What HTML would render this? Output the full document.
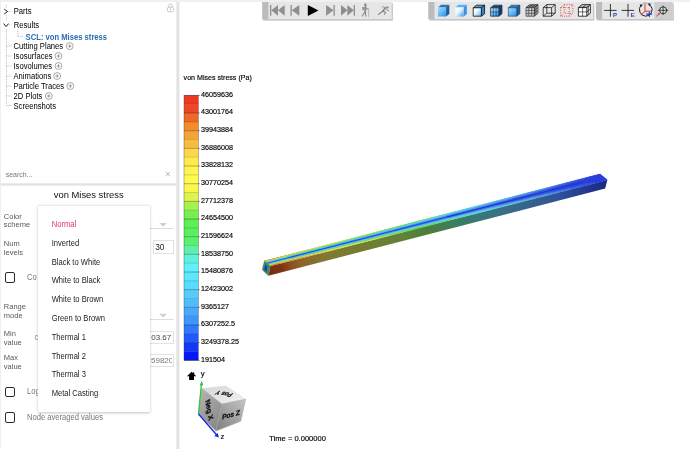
<!DOCTYPE html>
<html>
<head>
<meta charset="utf-8">
<style>
html,body{margin:0;padding:0;}
body{width:690px;height:449px;overflow:hidden;background:#eff0f1;font-family:"Liberation Sans",sans-serif;position:relative;color:#222;}
.abs{position:absolute;}
#tree{left:1.2px;top:1.7px;width:175.3px;height:181.3px;background:#fff;}
#props{left:1.2px;top:186px;width:175.3px;height:263px;background:#fff;}
#view{left:180.3px;top:1.7px;width:510px;height:447.3px;background:#fff;}
#gut{left:176.4px;top:1.7px;width:3.9px;height:447.3px;background:linear-gradient(to right,#f4f4f4,#dfdfdf 40%,#e4e4e4 65%,#fbfbfb);}
#hdiv{left:1.2px;top:183px;width:175.3px;height:3px;background:linear-gradient(to bottom,#f0f0f0,#e2e2e2 45%,#e6e6e6 70%,#f6f6f6);}
.t{position:absolute;font-size:7.65px;line-height:10px;white-space:nowrap;color:#000;transform:scaleY(1.1);transform-origin:0 76%;}
.lbl{position:absolute;left:3.8px;font-size:7.5px;line-height:10px;white-space:nowrap;color:#585858;transform:scaleY(1.07);transform-origin:0 76%;}
.mi{position:absolute;left:51.7px;font-size:7.6px;line-height:10px;color:#1c1c1c;white-space:nowrap;transform:scaleY(1.07);transform-origin:0 76%;}
.cb{position:absolute;left:5px;width:8.4px;height:8.4px;border:1.35px solid #2a2a2a;border-radius:2px;background:#fff;}
.inp{position:absolute;border:0.8px solid #e2e2e2;background:#fff;box-sizing:border-box;}
.tick{position:absolute;font-size:7.2px;line-height:10px;color:#000;left:201.1px;white-space:nowrap;-webkit-text-stroke:0.15px #000;transform:scaleY(1.12);transform-origin:0 50%;}
.plus{position:absolute;width:6.5px;height:6.5px;border:0.55px solid #858585;border-radius:50%;}
.plus:before{content:"";position:absolute;left:1.5px;top:2.95px;width:3.5px;height:0.6px;background:#858585;}
.plus:after{content:"";position:absolute;top:1.5px;left:2.95px;height:3.5px;width:0.6px;background:#858585;}
svg{position:absolute;left:0;top:0;}
</style>
</head>
<body>
<div id="root" style="position:absolute;left:0;top:0;width:690px;height:449px;will-change:transform;">
<div id="tree" class="abs"></div>
<div id="props" class="abs"></div>
<div id="view" class="abs"></div>
<div id="gut" class="abs"></div>
<div id="hdiv" class="abs"></div>

<!-- tree lines + chevrons + lock + close -->
<svg width="180" height="190" viewBox="0 0 180 190">
  <g stroke="#b0b0b0" stroke-width="0.7" fill="none" stroke-dasharray="1.2 0.8">
    <line x1="6.4" y1="4.5" x2="6.4" y2="8"/>
    <line x1="6.4" y1="15" x2="6.4" y2="21"/>
    <line x1="6.4" y1="29" x2="6.4" y2="105.5"/>
    <line x1="8.5" y1="11.5" x2="11.5" y2="11.5"/>
    <line x1="9" y1="25" x2="11.5" y2="25"/>
    <line x1="6.4" y1="46" x2="11.5" y2="46"/>
    <line x1="6.4" y1="56" x2="11.5" y2="56"/>
    <line x1="6.4" y1="66" x2="11.5" y2="66"/>
    <line x1="6.4" y1="76" x2="11.5" y2="76"/>
    <line x1="6.4" y1="86" x2="11.5" y2="86"/>
    <line x1="6.4" y1="96" x2="11.5" y2="96"/>
    <line x1="6.4" y1="105.5" x2="11.5" y2="105.5"/>
    <line x1="17.8" y1="29" x2="17.8" y2="36.5"/>
    <line x1="17.8" y1="36.5" x2="23.5" y2="36.5"/>
  </g>
  <path d="M4.3 9.2 L7.6 11.5 L4.3 13.9" fill="none" stroke="#111" stroke-width="0.95"/>
  <path d="M3.6 23.6 L6.1 26.6 L8.6 23.6" fill="none" stroke="#111" stroke-width="0.95"/>
  <!-- lock -->
  <g fill="none" stroke="#c2c2c2" stroke-width="0.9">
    <path d="M168.7 7.3 V5.8 a1.8 1.8 0 0 1 3.6 0 V7.3"/>
    <rect x="167.4" y="7.2" width="6.2" height="4.6" rx="1.6"/>
  </g>
  <rect x="170.1" y="8.3" width="0.9" height="2.2" fill="#c2c2c2"/>
  <!-- x -->
  <path d="M165.8 172 L169.8 176 M169.8 172 L165.8 176" stroke="#999" stroke-width="0.7" fill="none"/>
</svg>

<!-- tree -->
<div class="t" style="left:13.7px;top:7.2px;">Parts</div>
<div class="t" style="left:13.7px;top:20.6px;">Results</div>
<div class="t" style="left:25.6px;top:33px;color:#2a6db4;font-weight:bold;">SCL: von Mises stress</div>
<div class="t" style="left:13.5px;top:41.7px;">Cutting Planes</div>
<div class="t" style="left:13.5px;top:51.6px;">Isosurfaces</div>
<div class="t" style="left:13.5px;top:61.6px;">Isovolumes</div>
<div class="t" style="left:13.5px;top:71.6px;">Animations</div>
<div class="t" style="left:13.5px;top:81.6px;">Particle Traces</div>
<div class="t" style="left:13.5px;top:91.6px;">2D Plots</div>
<div class="t" style="left:13.5px;top:101.6px;">Screenshots</div>

<svg width="180" height="120" viewBox="0 0 180 120">
<circle cx="69.7" cy="46.1" r="3.45" fill="none" stroke="#707070" stroke-width="0.6"/><path d="M67.9 46.1 h3.6 M69.7 44.3 v3.6" stroke="#707070" stroke-width="0.65" fill="none"/>
<circle cx="58.5" cy="56.0" r="3.45" fill="none" stroke="#707070" stroke-width="0.6"/><path d="M56.7 56.0 h3.6 M58.5 54.2 v3.6" stroke="#707070" stroke-width="0.65" fill="none"/>
<circle cx="58.5" cy="66.0" r="3.45" fill="none" stroke="#707070" stroke-width="0.6"/><path d="M56.7 66.0 h3.6 M58.5 64.2 v3.6" stroke="#707070" stroke-width="0.65" fill="none"/>
<circle cx="57.2" cy="76.0" r="3.45" fill="none" stroke="#707070" stroke-width="0.6"/><path d="M55.4 76.0 h3.6 M57.2 74.2 v3.6" stroke="#707070" stroke-width="0.65" fill="none"/>
<circle cx="70.3" cy="86.0" r="3.45" fill="none" stroke="#707070" stroke-width="0.6"/><path d="M68.5 86.0 h3.6 M70.3 84.2 v3.6" stroke="#707070" stroke-width="0.65" fill="none"/>
<circle cx="48.8" cy="96.0" r="3.45" fill="none" stroke="#707070" stroke-width="0.6"/><path d="M47.0 96.0 h3.6 M48.8 94.2 v3.6" stroke="#707070" stroke-width="0.65" fill="none"/>
</svg>
<div class="t" style="left:5.7px;top:169.5px;color:#777;font-size:7px;">search...</div>

<!-- props -->
<div class="t" style="left:53.8px;top:189px;font-size:9.4px;line-height:12px;color:#111;transform:scaleY(1.04);">von Mises stress</div>
<div class="lbl" style="top:212px;">Color</div>
<div class="lbl" style="top:220px;">scheme</div>
<div class="lbl" style="top:239px;">Num</div>
<div class="lbl" style="top:248px;">levels</div>
<div class="lbl" style="top:302px;">Range</div>
<div class="lbl" style="top:311px;">mode</div>
<div class="lbl" style="top:329px;">Min</div>
<div class="lbl" style="top:338px;">value</div>
<div class="lbl" style="top:353px;">Max</div>
<div class="lbl" style="top:362px;">value</div>

<!-- selects -->
<div class="abs" style="left:40px;top:228.4px;width:133.6px;height:0.8px;background:#ddd;"></div>
<div class="abs" style="left:40px;top:319px;width:133.6px;height:0.8px;background:#ddd;"></div>
<svg width="180" height="449" viewBox="0 0 180 449">
  <path d="M159.5 223 H166.8 L163.15 226.8 Z" fill="#cfcfcf"/>
  <path d="M159.4 313.7 H167 L163.2 317.5 Z" fill="#cfcfcf"/>
</svg>
<div class="inp" style="left:152.5px;top:239.7px;width:21.3px;height:14.1px;"></div>
<div class="t" style="left:155.2px;top:241.9px;font-size:8.4px;color:#222;transform:none;">30</div>
<div class="inp" style="left:120px;top:330.6px;width:53.8px;height:13.6px;"></div>
<div class="t" style="left:151.2px;top:333.2px;font-size:8px;color:#444;transform:none;">03.67</div>
<div class="inp" style="left:120px;top:354.2px;width:53.8px;height:13.2px;"></div>
<div class="abs" style="left:140px;top:354px;width:31.7px;height:14px;overflow:hidden;"><div class="t" style="left:11px;top:2.4px;font-size:8px;color:#777;transform:none;">59820</div></div>

<!-- checkboxes -->
<div class="cb" style="top:272.2px;"></div>
<div class="t" style="left:27px;top:272.5px;font-size:7.6px;color:#777;">Co</div>
<div class="cb" style="top:386.8px;"></div>
<div class="t" style="left:27px;top:387.2px;font-size:7.6px;color:#777;">Log</div>
<div class="cb" style="top:412.4px;"></div>
<div class="t" style="left:27px;top:412.9px;font-size:7.6px;color:#777;">Node averaged values</div>
<div class="t" style="left:34.6px;top:333px;font-size:7.6px;color:#8a8a8a;">c</div>

<!-- menu -->
<div class="abs" style="left:37.6px;top:205.6px;width:112.8px;height:206.4px;background:#fff;box-shadow:0 0.4px 3px rgba(0,0,0,0.24);border-radius:1px;"></div>
<div class="mi" style="top:220px;color:#e8345d;">Normal</div>
<div class="mi" style="top:239px;">Inverted</div>
<div class="mi" style="top:258px;">Black to White</div>
<div class="mi" style="top:276px;">White to Black</div>
<div class="mi" style="top:295px;">White to Brown</div>
<div class="mi" style="top:314px;">Green to Brown</div>
<div class="mi" style="top:333px;">Thermal 1</div>
<div class="mi" style="top:352px;">Thermal 2</div>
<div class="mi" style="top:370px;">Thermal 3</div>
<div class="mi" style="top:389px;">Metal Casting</div>

<!-- viewport -->
<div class="t" style="left:183.6px;top:72.5px;font-size:7.1px;color:#000;-webkit-text-stroke:0.15px #000;">von Mises stress (Pa)</div>
<div class="t" style="left:269.3px;top:433.8px;font-size:7.55px;color:#000;-webkit-text-stroke:0.15px #000;transform:scaleY(1.04);">Time = 0.000000</div>
<div class="tick" style="top:89.70px;">46059636</div>
<div class="tick" style="top:107.36px;">43001764</div>
<div class="tick" style="top:125.02px;">39943884</div>
<div class="tick" style="top:142.68px;">36886008</div>
<div class="tick" style="top:160.34px;">33828132</div>
<div class="tick" style="top:178.00px;">30770254</div>
<div class="tick" style="top:195.66px;">27712378</div>
<div class="tick" style="top:213.32px;">24654500</div>
<div class="tick" style="top:230.98px;">21596624</div>
<div class="tick" style="top:248.64px;">18538750</div>
<div class="tick" style="top:266.30px;">15480876</div>
<div class="tick" style="top:283.96px;">12423002</div>
<div class="tick" style="top:301.62px;">9365127</div>
<div class="tick" style="top:319.28px;">6307252.5</div>
<div class="tick" style="top:336.94px;">3249378.25</div>
<div class="tick" style="top:354.60px;">191504</div>

<svg width="690" height="449" viewBox="0 0 690 449">
<defs>
  <filter id="sh" x="-5%" y="-20%" width="110%" height="150%"><feGaussianBlur stdDeviation="0.7"/></filter>
  <linearGradient id="gTop" x1="0" y1="0" x2="1" y2="1"><stop offset="0" stop-color="#d4d4d4"/><stop offset="1" stop-color="#f4f4f4"/></linearGradient>
  <linearGradient id="gLeft" x1="0" y1="0" x2="0.6" y2="1"><stop offset="0" stop-color="#b6b6b6"/><stop offset="1" stop-color="#8a8a8a"/></linearGradient>
  <linearGradient id="gRight" x1="0" y1="1" x2="1" y2="0"><stop offset="0" stop-color="#7c7c7c"/><stop offset="0.5" stop-color="#a2a2a2"/><stop offset="1" stop-color="#c4c4c4"/></linearGradient>
  <linearGradient id="c1f" x1="0" y1="0" x2="0.8" y2="1"><stop offset="0" stop-color="#a6defc"/><stop offset="0.5" stop-color="#6cbef4"/><stop offset="1" stop-color="#3896e8"/></linearGradient>
  <linearGradient id="c4f" x1="0" y1="0" x2="0.6" y2="1"><stop offset="0" stop-color="#bcecfe"/><stop offset="0.55" stop-color="#80ccf8"/><stop offset="1" stop-color="#3c9aea"/></linearGradient>
  <linearGradient id="c2f" x1="0" y1="0" x2="1" y2="1"><stop offset="0" stop-color="#ffffff"/><stop offset="0.45" stop-color="#e8f4fd"/><stop offset="1" stop-color="#3a9cee"/></linearGradient>
  <linearGradient id="c3f" x1="0" y1="0" x2="1" y2="1"><stop offset="0" stop-color="#ffffff"/><stop offset="0.4" stop-color="#f2f9ff"/><stop offset="1" stop-color="#5ab0ee"/></linearGradient>
</defs>
<!-- legend -->
<rect x="184" y="95.40" width="14.3" height="8.93" fill="#ee3820"/>
<rect x="184" y="104.23" width="14.3" height="8.93" fill="#ee4822"/>
<rect x="184" y="113.06" width="14.3" height="8.93" fill="#f06828"/>
<rect x="184" y="121.89" width="14.3" height="8.93" fill="#f48c2c"/>
<rect x="184" y="130.72" width="14.3" height="8.93" fill="#f4a434"/>
<rect x="184" y="139.55" width="14.3" height="8.93" fill="#f8bc40"/>
<rect x="184" y="148.38" width="14.3" height="8.93" fill="#fcd848"/>
<rect x="184" y="157.21" width="14.3" height="8.93" fill="#ffec4c"/>
<rect x="184" y="166.04" width="14.3" height="8.93" fill="#fff450"/>
<rect x="184" y="174.87" width="14.3" height="8.93" fill="#fffa50"/>
<rect x="184" y="183.70" width="14.3" height="8.93" fill="#fbf64c"/>
<rect x="184" y="192.53" width="14.3" height="8.93" fill="#dcf44c"/>
<rect x="184" y="201.36" width="14.3" height="8.93" fill="#a8f04c"/>
<rect x="184" y="210.19" width="14.3" height="8.93" fill="#74f050"/>
<rect x="184" y="219.02" width="14.3" height="8.93" fill="#5cf054"/>
<rect x="184" y="227.85" width="14.3" height="8.93" fill="#58f05c"/>
<rect x="184" y="236.68" width="14.3" height="8.93" fill="#58f06c"/>
<rect x="184" y="245.51" width="14.3" height="8.93" fill="#5cf0a8"/>
<rect x="184" y="254.34" width="14.3" height="8.93" fill="#60f0dc"/>
<rect x="184" y="263.17" width="14.3" height="8.93" fill="#60f0fc"/>
<rect x="184" y="272.00" width="14.3" height="8.93" fill="#5ce8fc"/>
<rect x="184" y="280.83" width="14.3" height="8.93" fill="#58dcfc"/>
<rect x="184" y="289.66" width="14.3" height="8.93" fill="#54ccfc"/>
<rect x="184" y="298.49" width="14.3" height="8.93" fill="#50bcfc"/>
<rect x="184" y="307.32" width="14.3" height="8.93" fill="#48a8fc"/>
<rect x="184" y="316.15" width="14.3" height="8.93" fill="#4094fc"/>
<rect x="184" y="324.98" width="14.3" height="8.93" fill="#3078fc"/>
<rect x="184" y="333.81" width="14.3" height="8.93" fill="#2058fc"/>
<rect x="184" y="342.64" width="14.3" height="8.93" fill="#1038fc"/>
<rect x="184" y="351.47" width="14.3" height="8.93" fill="#0418fc"/>
<line x1="184" x2="198.3" y1="95.40" y2="95.40" stroke="#000" stroke-opacity="0.55" stroke-width="0.55"/>
<line x1="184" x2="198.3" y1="104.23" y2="104.23" stroke="#000" stroke-opacity="0.3" stroke-width="0.55"/>
<line x1="184" x2="198.3" y1="113.06" y2="113.06" stroke="#000" stroke-opacity="0.55" stroke-width="0.55"/>
<line x1="184" x2="198.3" y1="121.89" y2="121.89" stroke="#000" stroke-opacity="0.3" stroke-width="0.55"/>
<line x1="184" x2="198.3" y1="130.72" y2="130.72" stroke="#000" stroke-opacity="0.55" stroke-width="0.55"/>
<line x1="184" x2="198.3" y1="139.55" y2="139.55" stroke="#000" stroke-opacity="0.3" stroke-width="0.55"/>
<line x1="184" x2="198.3" y1="148.38" y2="148.38" stroke="#000" stroke-opacity="0.55" stroke-width="0.55"/>
<line x1="184" x2="198.3" y1="157.21" y2="157.21" stroke="#000" stroke-opacity="0.3" stroke-width="0.55"/>
<line x1="184" x2="198.3" y1="166.04" y2="166.04" stroke="#000" stroke-opacity="0.55" stroke-width="0.55"/>
<line x1="184" x2="198.3" y1="174.87" y2="174.87" stroke="#000" stroke-opacity="0.3" stroke-width="0.55"/>
<line x1="184" x2="198.3" y1="183.70" y2="183.70" stroke="#000" stroke-opacity="0.55" stroke-width="0.55"/>
<line x1="184" x2="198.3" y1="192.53" y2="192.53" stroke="#000" stroke-opacity="0.3" stroke-width="0.55"/>
<line x1="184" x2="198.3" y1="201.36" y2="201.36" stroke="#000" stroke-opacity="0.55" stroke-width="0.55"/>
<line x1="184" x2="198.3" y1="210.19" y2="210.19" stroke="#000" stroke-opacity="0.3" stroke-width="0.55"/>
<line x1="184" x2="198.3" y1="219.02" y2="219.02" stroke="#000" stroke-opacity="0.55" stroke-width="0.55"/>
<line x1="184" x2="198.3" y1="227.85" y2="227.85" stroke="#000" stroke-opacity="0.3" stroke-width="0.55"/>
<line x1="184" x2="198.3" y1="236.68" y2="236.68" stroke="#000" stroke-opacity="0.55" stroke-width="0.55"/>
<line x1="184" x2="198.3" y1="245.51" y2="245.51" stroke="#000" stroke-opacity="0.3" stroke-width="0.55"/>
<line x1="184" x2="198.3" y1="254.34" y2="254.34" stroke="#000" stroke-opacity="0.55" stroke-width="0.55"/>
<line x1="184" x2="198.3" y1="263.17" y2="263.17" stroke="#000" stroke-opacity="0.3" stroke-width="0.55"/>
<line x1="184" x2="198.3" y1="272.00" y2="272.00" stroke="#000" stroke-opacity="0.55" stroke-width="0.55"/>
<line x1="184" x2="198.3" y1="280.83" y2="280.83" stroke="#000" stroke-opacity="0.3" stroke-width="0.55"/>
<line x1="184" x2="198.3" y1="289.66" y2="289.66" stroke="#000" stroke-opacity="0.55" stroke-width="0.55"/>
<line x1="184" x2="198.3" y1="298.49" y2="298.49" stroke="#000" stroke-opacity="0.3" stroke-width="0.55"/>
<line x1="184" x2="198.3" y1="307.32" y2="307.32" stroke="#000" stroke-opacity="0.55" stroke-width="0.55"/>
<line x1="184" x2="198.3" y1="316.15" y2="316.15" stroke="#000" stroke-opacity="0.3" stroke-width="0.55"/>
<line x1="184" x2="198.3" y1="324.98" y2="324.98" stroke="#000" stroke-opacity="0.55" stroke-width="0.55"/>
<line x1="184" x2="198.3" y1="333.81" y2="333.81" stroke="#000" stroke-opacity="0.3" stroke-width="0.55"/>
<line x1="184" x2="198.3" y1="342.64" y2="342.64" stroke="#000" stroke-opacity="0.55" stroke-width="0.55"/>
<line x1="184" x2="198.3" y1="351.47" y2="351.47" stroke="#000" stroke-opacity="0.3" stroke-width="0.55"/>
<line x1="184" x2="198.3" y1="360.30" y2="360.30" stroke="#000" stroke-opacity="0.55" stroke-width="0.55"/>
<line x1="198" x2="199.7" y1="95.40" y2="95.40" stroke="#444" stroke-width="0.6"/>
<line x1="198" x2="199.7" y1="113.06" y2="113.06" stroke="#444" stroke-width="0.6"/>
<line x1="198" x2="199.7" y1="130.72" y2="130.72" stroke="#444" stroke-width="0.6"/>
<line x1="198" x2="199.7" y1="148.38" y2="148.38" stroke="#444" stroke-width="0.6"/>
<line x1="198" x2="199.7" y1="166.04" y2="166.04" stroke="#444" stroke-width="0.6"/>
<line x1="198" x2="199.7" y1="183.70" y2="183.70" stroke="#444" stroke-width="0.6"/>
<line x1="198" x2="199.7" y1="201.36" y2="201.36" stroke="#444" stroke-width="0.6"/>
<line x1="198" x2="199.7" y1="219.02" y2="219.02" stroke="#444" stroke-width="0.6"/>
<line x1="198" x2="199.7" y1="236.68" y2="236.68" stroke="#444" stroke-width="0.6"/>
<line x1="198" x2="199.7" y1="254.34" y2="254.34" stroke="#444" stroke-width="0.6"/>
<line x1="198" x2="199.7" y1="272.00" y2="272.00" stroke="#444" stroke-width="0.6"/>
<line x1="198" x2="199.7" y1="289.66" y2="289.66" stroke="#444" stroke-width="0.6"/>
<line x1="198" x2="199.7" y1="307.32" y2="307.32" stroke="#444" stroke-width="0.6"/>
<line x1="198" x2="199.7" y1="324.98" y2="324.98" stroke="#444" stroke-width="0.6"/>
<line x1="198" x2="199.7" y1="342.64" y2="342.64" stroke="#444" stroke-width="0.6"/>
<line x1="198" x2="199.7" y1="360.30" y2="360.30" stroke="#444" stroke-width="0.6"/>
<rect x="184" y="95.40" width="14.3" height="264.90" fill="none" stroke="#333" stroke-opacity="0.6" stroke-width="0.6"/>
<!-- beam -->
<g>
<linearGradient id="gSide" gradientUnits="userSpaceOnUse" x1="269" y1="270.7" x2="606.2" y2="184.3"><stop offset="0.000" stop-color="#762e10"/><stop offset="0.035" stop-color="#7c3414"/><stop offset="0.065" stop-color="#8a5022"/><stop offset="0.100" stop-color="#8c662d"/><stop offset="0.167" stop-color="#827832"/><stop offset="0.283" stop-color="#737d32"/><stop offset="0.399" stop-color="#5f8237"/><stop offset="0.477" stop-color="#4b7d3c"/><stop offset="0.555" stop-color="#3c7d64"/><stop offset="0.671" stop-color="#377382"/><stop offset="0.787" stop-color="#375f8c"/><stop offset="0.864" stop-color="#2d5096"/><stop offset="0.942" stop-color="#233791"/><stop offset="1.000" stop-color="#1a2a80"/></linearGradient>
<polygon points="270.4,266.0 607.3,180.0 605.2,188.6 268.4,275.7" fill="url(#gSide)"/>
<polygon points="264.3,261.0 600.0,174.0 607.3,180.0 270.4,266.0" fill="#4a9ae0"/>
<polygon points="264.3,261.0 273.9,258.5 274.3,258.9 264.7,261.4" fill="#e2682e" stroke="#e2682e" stroke-width="0.4"/>
<polygon points="273.9,258.5 285.9,255.4 286.3,255.8 274.3,258.9" fill="#e68832" stroke="#e68832" stroke-width="0.4"/>
<polygon points="285.9,255.4 297.9,252.3 298.3,252.7 286.3,255.8" fill="#e49e3b" stroke="#e49e3b" stroke-width="0.4"/>
<polygon points="297.9,252.3 309.9,249.2 310.3,249.6 298.3,252.7" fill="#e7b346" stroke="#e7b346" stroke-width="0.4"/>
<polygon points="309.9,249.2 321.8,246.1 322.3,246.5 310.3,249.6" fill="#ebcb4d" stroke="#ebcb4d" stroke-width="0.4"/>
<polygon points="321.8,246.1 326.6,244.8 327.1,245.2 322.3,246.5" fill="#eedd50" stroke="#eedd50" stroke-width="0.4"/>
<polygon points="326.6,244.8 333.8,243.0 334.3,243.4 327.1,245.2" fill="#ecdb52" stroke="#ecdb52" stroke-width="0.4"/>
<polygon points="333.8,243.0 345.8,239.9 346.3,240.2 334.3,243.4" fill="#ece256" stroke="#ece256" stroke-width="0.4"/>
<polygon points="345.8,239.9 357.8,236.8 358.3,237.1 346.3,240.2" fill="#ece756" stroke="#ece756" stroke-width="0.4"/>
<polygon points="357.8,236.8 369.8,233.7 370.3,234.0 358.3,237.1" fill="#e8e452" stroke="#e8e452" stroke-width="0.4"/>
<polygon points="369.8,233.7 372.2,233.0 372.7,233.4 370.3,234.0" fill="#e6e255" stroke="#e6e255" stroke-width="0.4"/>
<polygon points="372.2,233.0 384.2,229.9 384.7,230.3 372.7,233.4" fill="#cce055" stroke="#cce055" stroke-width="0.4"/>
<polygon points="384.2,229.9 396.2,226.8 396.7,227.2 384.7,230.3" fill="#a1dd55" stroke="#a1dd55" stroke-width="0.4"/>
<polygon points="396.2,226.8 408.2,223.7 408.6,224.1 396.7,227.2" fill="#76dd58" stroke="#76dd58" stroke-width="0.4"/>
<polygon points="408.2,223.7 410.6,223.1 411.0,223.5 408.6,224.1" fill="#62dd5b" stroke="#62dd5b" stroke-width="0.4"/>
<polygon points="410.6,223.1 420.2,220.6 420.6,221.0 411.0,223.5" fill="#64db5d" stroke="#64db5d" stroke-width="0.4"/>
<polygon points="420.2,220.6 432.1,217.5 432.6,217.9 420.6,221.0" fill="#60db64" stroke="#60db64" stroke-width="0.4"/>
<polygon points="432.1,217.5 444.1,214.4 444.6,214.8 432.6,217.9" fill="#60db70" stroke="#60db70" stroke-width="0.4"/>
<polygon points="444.1,214.4 453.7,211.9 454.2,212.3 444.6,214.8" fill="#64dba1" stroke="#64dba1" stroke-width="0.4"/>
<polygon points="453.7,211.9 456.1,211.3 456.6,211.7 454.2,212.3" fill="#65daa1" stroke="#65daa1" stroke-width="0.4"/>
<polygon points="456.1,211.3 468.1,208.2 468.6,208.6 456.6,211.7" fill="#68daca" stroke="#68daca" stroke-width="0.4"/>
<polygon points="468.1,208.2 480.1,205.1 480.6,205.5 468.6,208.6" fill="#68dae3" stroke="#68dae3" stroke-width="0.4"/>
<polygon points="480.1,205.1 492.1,202.0 492.6,202.4 480.6,205.5" fill="#65d3e3" stroke="#65d3e3" stroke-width="0.4"/>
<polygon points="492.1,202.0 494.5,201.3 495.0,201.7 492.6,202.4" fill="#62cae3" stroke="#62cae3" stroke-width="0.4"/>
<polygon points="494.5,201.3 504.1,198.9 504.6,199.3 495.0,201.7" fill="#64c9e1" stroke="#64c9e1" stroke-width="0.4"/>
<polygon points="504.1,198.9 516.1,195.8 516.6,196.2 504.6,199.3" fill="#61bde1" stroke="#61bde1" stroke-width="0.4"/>
<polygon points="516.1,195.8 528.1,192.6 528.6,193.1 516.6,196.2" fill="#5eb0e1" stroke="#5eb0e1" stroke-width="0.4"/>
<polygon points="528.1,192.6 537.7,190.2 538.2,190.6 528.6,193.1" fill="#58a1e1" stroke="#58a1e1" stroke-width="0.4"/>
<polygon points="537.7,190.2 540.1,189.5 540.6,190.0 538.2,190.6" fill="#5aa1df" stroke="#5aa1df" stroke-width="0.4"/>
<polygon points="540.1,189.5 552.0,186.4 552.6,186.8 540.6,190.0" fill="#5492df" stroke="#5492df" stroke-width="0.4"/>
<polygon points="552.0,186.4 564.0,183.3 564.5,183.7 552.6,186.8" fill="#487ddf" stroke="#487ddf" stroke-width="0.4"/>
<polygon points="564.0,183.3 576.0,180.2 576.5,180.6 564.5,183.7" fill="#3c66df" stroke="#3c66df" stroke-width="0.4"/>
<polygon points="576.0,180.2 578.4,179.6 578.9,180.0 576.5,180.6" fill="#304edf" stroke="#304edf" stroke-width="0.4"/>
<polygon points="578.4,179.6 588.0,177.1 588.5,177.5 578.9,180.0" fill="#3450dd" stroke="#3450dd" stroke-width="0.4"/>
<polygon points="588.0,177.1 600.0,174.0 600.5,174.4 588.5,177.5" fill="#2b39dd" stroke="#2b39dd" stroke-width="0.4"/>
<polygon points="264.7,261.4 271.9,259.5 272.4,259.9 265.2,261.7" fill="#edcc4b" stroke="#edcc4b" stroke-width="0.4"/>
<polygon points="271.9,259.5 286.3,255.8 286.8,256.1 272.4,259.9" fill="#f0de4e" stroke="#f0de4e" stroke-width="0.4"/>
<polygon points="286.3,255.8 300.7,252.0 301.2,252.4 286.8,256.1" fill="#eee454" stroke="#eee454" stroke-width="0.4"/>
<polygon points="300.7,252.0 315.1,248.3 315.6,248.7 301.2,252.4" fill="#eee954" stroke="#eee954" stroke-width="0.4"/>
<polygon points="315.1,248.3 327.1,245.2 327.5,245.6 315.6,248.7" fill="#eae650" stroke="#eae650" stroke-width="0.4"/>
<polygon points="327.1,245.2 329.5,244.6 329.9,245.0 327.5,245.6" fill="#e8e452" stroke="#e8e452" stroke-width="0.4"/>
<polygon points="329.5,244.6 343.9,240.9 344.3,241.2 329.9,245.0" fill="#cee252" stroke="#cee252" stroke-width="0.4"/>
<polygon points="343.9,240.9 358.3,237.1 358.7,237.5 344.3,241.2" fill="#a1df52" stroke="#a1df52" stroke-width="0.4"/>
<polygon points="358.3,237.1 370.3,234.0 370.7,234.4 358.7,237.5" fill="#75df56" stroke="#75df56" stroke-width="0.4"/>
<polygon points="370.3,234.0 372.7,233.4 373.1,233.8 370.7,234.4" fill="#76dd58" stroke="#76dd58" stroke-width="0.4"/>
<polygon points="372.7,233.4 387.1,229.7 387.5,230.1 373.1,233.8" fill="#62dd5b" stroke="#62dd5b" stroke-width="0.4"/>
<polygon points="387.1,229.7 401.4,226.0 401.9,226.4 387.5,230.1" fill="#5fdd62" stroke="#5fdd62" stroke-width="0.4"/>
<polygon points="401.4,226.0 411.0,223.5 411.5,223.9 401.9,226.4" fill="#5fdd6f" stroke="#5fdd6f" stroke-width="0.4"/>
<polygon points="411.0,223.5 415.8,222.2 416.3,222.6 411.5,223.9" fill="#60db70" stroke="#60db70" stroke-width="0.4"/>
<polygon points="415.8,222.2 430.2,218.5 430.7,218.9 416.3,222.6" fill="#64dba1" stroke="#64dba1" stroke-width="0.4"/>
<polygon points="430.2,218.5 444.6,214.8 445.1,215.2 430.7,218.9" fill="#67dbcb" stroke="#67dbcb" stroke-width="0.4"/>
<polygon points="444.6,214.8 454.2,212.3 454.7,212.7 445.1,215.2" fill="#67dbe5" stroke="#67dbe5" stroke-width="0.4"/>
<polygon points="454.2,212.3 459.0,211.1 459.5,211.5 454.7,212.7" fill="#68dae3" stroke="#68dae3" stroke-width="0.4"/>
<polygon points="459.0,211.1 473.4,207.3 473.9,207.7 459.5,211.5" fill="#65d3e3" stroke="#65d3e3" stroke-width="0.4"/>
<polygon points="473.4,207.3 485.4,204.2 485.9,204.6 473.9,207.7" fill="#62cae3" stroke="#62cae3" stroke-width="0.4"/>
<polygon points="485.4,204.2 495.0,201.7 495.5,202.2 485.9,204.6" fill="#5fbde3" stroke="#5fbde3" stroke-width="0.4"/>
<polygon points="495.0,201.7 499.8,200.5 500.3,200.9 495.5,202.2" fill="#61bde1" stroke="#61bde1" stroke-width="0.4"/>
<polygon points="499.8,200.5 514.2,196.8 514.7,197.2 500.3,200.9" fill="#5eb0e1" stroke="#5eb0e1" stroke-width="0.4"/>
<polygon points="514.2,196.8 528.6,193.1 529.1,193.5 514.7,197.2" fill="#58a1e1" stroke="#58a1e1" stroke-width="0.4"/>
<polygon points="528.6,193.1 538.2,190.6 538.7,191.0 529.1,193.5" fill="#5192e1" stroke="#5192e1" stroke-width="0.4"/>
<polygon points="538.2,190.6 543.0,189.3 543.5,189.7 538.7,191.0" fill="#5492df" stroke="#5492df" stroke-width="0.4"/>
<polygon points="543.0,189.3 557.3,185.6 557.9,186.0 543.5,189.7" fill="#487ddf" stroke="#487ddf" stroke-width="0.4"/>
<polygon points="557.3,185.6 571.7,181.9 572.3,182.3 557.9,186.0" fill="#3c66df" stroke="#3c66df" stroke-width="0.4"/>
<polygon points="571.7,181.9 578.9,180.0 579.5,180.4 572.3,182.3" fill="#304edf" stroke="#304edf" stroke-width="0.4"/>
<polygon points="578.9,180.0 586.1,178.2 586.6,178.6 579.5,180.4" fill="#3450dd" stroke="#3450dd" stroke-width="0.4"/>
<polygon points="586.1,178.2 600.5,174.4 601.0,174.9 586.6,178.6" fill="#2b39dd" stroke="#2b39dd" stroke-width="0.4"/>
<polygon points="265.2,261.7 270.0,260.5 270.4,260.8 265.6,262.1" fill="#ece74e" stroke="#ece74e" stroke-width="0.4"/>
<polygon points="270.0,260.5 286.8,256.1 287.2,256.5 270.4,260.8" fill="#d0e64e" stroke="#d0e64e" stroke-width="0.4"/>
<polygon points="286.8,256.1 306.0,251.2 306.4,251.5 287.2,256.5" fill="#a1e050" stroke="#a1e050" stroke-width="0.4"/>
<polygon points="306.0,251.2 322.7,246.8 323.2,247.2 306.4,251.5" fill="#74e054" stroke="#74e054" stroke-width="0.4"/>
<polygon points="322.7,246.8 327.5,245.6 328.0,246.0 323.2,247.2" fill="#5ee057" stroke="#5ee057" stroke-width="0.4"/>
<polygon points="327.5,245.6 339.5,242.5 340.0,242.9 328.0,246.0" fill="#60df59" stroke="#60df59" stroke-width="0.4"/>
<polygon points="339.5,242.5 356.3,238.1 356.8,238.5 340.0,242.9" fill="#5ddf60" stroke="#5ddf60" stroke-width="0.4"/>
<polygon points="356.3,238.1 370.7,234.4 371.2,234.8 356.8,238.5" fill="#5ddf6e" stroke="#5ddf6e" stroke-width="0.4"/>
<polygon points="370.7,234.4 375.5,233.2 376.0,233.6 371.2,234.8" fill="#5fdd6f" stroke="#5fdd6f" stroke-width="0.4"/>
<polygon points="375.5,233.2 392.3,228.8 392.8,229.2 376.0,233.6" fill="#62dda1" stroke="#62dda1" stroke-width="0.4"/>
<polygon points="392.3,228.8 409.1,224.5 409.6,224.9 392.8,229.2" fill="#65ddcc" stroke="#65ddcc" stroke-width="0.4"/>
<polygon points="409.1,224.5 411.5,223.9 412.0,224.3 409.6,224.9" fill="#65dde7" stroke="#65dde7" stroke-width="0.4"/>
<polygon points="411.5,223.9 425.9,220.1 426.4,220.5 412.0,224.3" fill="#67dbe5" stroke="#67dbe5" stroke-width="0.4"/>
<polygon points="425.9,220.1 445.1,215.2 445.6,215.6 426.4,220.5" fill="#64d5e5" stroke="#64d5e5" stroke-width="0.4"/>
<polygon points="445.1,215.2 454.7,212.7 455.2,213.1 445.6,215.6" fill="#60cbe5" stroke="#60cbe5" stroke-width="0.4"/>
<polygon points="454.7,212.7 461.9,210.8 462.4,211.2 455.2,213.1" fill="#62cae3" stroke="#62cae3" stroke-width="0.4"/>
<polygon points="461.9,210.8 478.7,206.5 479.2,206.9 462.4,211.2" fill="#5fbde3" stroke="#5fbde3" stroke-width="0.4"/>
<polygon points="478.7,206.5 495.5,202.2 496.0,202.6 479.2,206.9" fill="#5cb1e3" stroke="#5cb1e3" stroke-width="0.4"/>
<polygon points="495.5,202.2 514.7,197.2 515.2,197.6 496.0,202.6" fill="#58a1e1" stroke="#58a1e1" stroke-width="0.4"/>
<polygon points="514.7,197.2 531.5,192.8 532.0,193.3 515.2,197.6" fill="#5192e1" stroke="#5192e1" stroke-width="0.4"/>
<polygon points="531.5,192.8 538.7,191.0 539.2,191.4 532.0,193.3" fill="#457ce1" stroke="#457ce1" stroke-width="0.4"/>
<polygon points="538.7,191.0 548.3,188.5 548.8,188.9 539.2,191.4" fill="#487ddf" stroke="#487ddf" stroke-width="0.4"/>
<polygon points="548.3,188.5 565.1,184.2 565.6,184.6 548.8,188.9" fill="#3c66df" stroke="#3c66df" stroke-width="0.4"/>
<polygon points="565.1,184.2 579.5,180.4 580.0,180.9 565.6,184.6" fill="#304edf" stroke="#304edf" stroke-width="0.4"/>
<polygon points="579.5,180.4 584.2,179.2 584.8,179.6 580.0,180.9" fill="#3450dd" stroke="#3450dd" stroke-width="0.4"/>
<polygon points="584.2,179.2 601.0,174.9 601.6,175.3 584.8,179.6" fill="#2b39dd" stroke="#2b39dd" stroke-width="0.4"/>
<polygon points="265.6,262.1 287.2,256.5 287.6,256.9 266.0,262.4" fill="#59e25d" stroke="#59e25d" stroke-width="0.4"/>
<polygon points="287.2,256.5 311.2,250.3 311.6,250.7 287.6,256.9" fill="#5be06d" stroke="#5be06d" stroke-width="0.4"/>
<polygon points="311.2,250.3 328.0,246.0 328.5,246.3 311.6,250.7" fill="#5ee0a1" stroke="#5ee0a1" stroke-width="0.4"/>
<polygon points="328.0,246.0 332.8,244.7 333.3,245.1 328.5,246.3" fill="#60dfa1" stroke="#60dfa1" stroke-width="0.4"/>
<polygon points="332.8,244.7 354.4,239.1 354.9,239.5 333.3,245.1" fill="#64dfce" stroke="#64dfce" stroke-width="0.4"/>
<polygon points="354.4,239.1 371.2,234.8 371.7,235.2 354.9,239.5" fill="#64dfe9" stroke="#64dfe9" stroke-width="0.4"/>
<polygon points="371.2,234.8 378.4,232.9 378.9,233.3 371.7,235.2" fill="#65dde7" stroke="#65dde7" stroke-width="0.4"/>
<polygon points="378.4,232.9 400.0,227.4 400.5,227.7 378.9,233.3" fill="#62d6e7" stroke="#62d6e7" stroke-width="0.4"/>
<polygon points="400.0,227.4 412.0,224.3 412.5,224.6 400.5,227.7" fill="#5fcce7" stroke="#5fcce7" stroke-width="0.4"/>
<polygon points="412.0,224.3 421.6,221.8 422.1,222.2 412.5,224.6" fill="#60cbe5" stroke="#60cbe5" stroke-width="0.4"/>
<polygon points="421.6,221.8 445.6,215.6 446.1,216.0 422.1,222.2" fill="#5dbee5" stroke="#5dbee5" stroke-width="0.4"/>
<polygon points="445.6,215.6 455.2,213.1 455.7,213.5 446.1,216.0" fill="#5ab1e5" stroke="#5ab1e5" stroke-width="0.4"/>
<polygon points="455.2,213.1 467.2,210.0 467.7,210.4 455.7,213.5" fill="#5cb1e3" stroke="#5cb1e3" stroke-width="0.4"/>
<polygon points="467.2,210.0 488.8,204.4 489.3,204.8 467.7,210.4" fill="#55a1e3" stroke="#55a1e3" stroke-width="0.4"/>
<polygon points="488.8,204.4 496.0,202.6 496.5,203.0 489.3,204.8" fill="#4f91e3" stroke="#4f91e3" stroke-width="0.4"/>
<polygon points="496.0,202.6 512.8,198.2 513.3,198.6 496.5,203.0" fill="#5192e1" stroke="#5192e1" stroke-width="0.4"/>
<polygon points="512.8,198.2 534.4,192.6 534.9,193.1 513.3,198.6" fill="#457ce1" stroke="#457ce1" stroke-width="0.4"/>
<polygon points="534.4,192.6 539.2,191.4 539.7,191.8 534.9,193.1" fill="#3964e1" stroke="#3964e1" stroke-width="0.4"/>
<polygon points="539.2,191.4 556.0,187.1 556.5,187.5 539.7,191.8" fill="#3c66df" stroke="#3c66df" stroke-width="0.4"/>
<polygon points="556.0,187.1 580.0,180.9 580.5,181.3 556.5,187.5" fill="#304edf" stroke="#304edf" stroke-width="0.4"/>
<polygon points="580.0,180.9 601.6,175.3 602.1,175.7 580.5,181.3" fill="#2b39dd" stroke="#2b39dd" stroke-width="0.4"/>
<polygon points="266.0,262.4 287.6,256.9 288.1,257.2 266.5,262.8" fill="#60e2ed" stroke="#60e2ed" stroke-width="0.4"/>
<polygon points="287.6,256.9 318.8,248.8 319.3,249.2 288.1,257.2" fill="#5ed9eb" stroke="#5ed9eb" stroke-width="0.4"/>
<polygon points="318.8,248.8 328.5,246.3 328.9,246.7 319.3,249.2" fill="#5bcfeb" stroke="#5bcfeb" stroke-width="0.4"/>
<polygon points="328.5,246.3 350.1,240.8 350.5,241.1 328.9,246.7" fill="#5dcee9" stroke="#5dcee9" stroke-width="0.4"/>
<polygon points="350.1,240.8 371.7,235.2 372.1,235.6 350.5,241.1" fill="#59c0e9" stroke="#59c0e9" stroke-width="0.4"/>
<polygon points="371.7,235.2 383.7,232.1 384.1,232.5 372.1,235.6" fill="#5bbfe7" stroke="#5bbfe7" stroke-width="0.4"/>
<polygon points="383.7,232.1 412.5,224.6 412.9,225.0 384.1,232.5" fill="#58b2e7" stroke="#58b2e7" stroke-width="0.4"/>
<polygon points="412.5,224.6 414.9,224.0 415.3,224.4 412.9,225.0" fill="#5ab1e5" stroke="#5ab1e5" stroke-width="0.4"/>
<polygon points="414.9,224.0 446.1,216.0 446.5,216.4 415.3,224.4" fill="#53a1e5" stroke="#53a1e5" stroke-width="0.4"/>
<polygon points="446.1,216.0 455.7,213.5 456.2,213.9 446.5,216.4" fill="#4d91e5" stroke="#4d91e5" stroke-width="0.4"/>
<polygon points="455.7,213.5 477.3,207.9 477.8,208.3 456.2,213.9" fill="#4f91e3" stroke="#4f91e3" stroke-width="0.4"/>
<polygon points="477.3,207.9 496.5,203.0 497.0,203.4 477.8,208.3" fill="#437be3" stroke="#437be3" stroke-width="0.4"/>
<polygon points="496.5,203.0 508.5,199.9 509.0,200.3 497.0,203.4" fill="#457ce1" stroke="#457ce1" stroke-width="0.4"/>
<polygon points="508.5,199.9 539.7,191.8 540.2,192.2 509.0,200.3" fill="#3964e1" stroke="#3964e1" stroke-width="0.4"/>
<polygon points="539.7,191.8 570.9,183.8 571.4,184.2 540.2,192.2" fill="#304edf" stroke="#304edf" stroke-width="0.4"/>
<polygon points="570.9,183.8 580.5,181.3 581.0,181.7 571.4,184.2" fill="#2736df" stroke="#2736df" stroke-width="0.4"/>
<polygon points="580.5,181.3 602.1,175.7 602.6,176.1 581.0,181.7" fill="#2b39dd" stroke="#2b39dd" stroke-width="0.4"/>
<polygon points="266.5,262.8 288.1,257.2 288.5,257.6 266.9,263.1" fill="#52b3ed" stroke="#52b3ed" stroke-width="0.4"/>
<polygon points="288.1,257.2 328.9,246.7 329.4,247.1 288.5,257.6" fill="#4da1eb" stroke="#4da1eb" stroke-width="0.4"/>
<polygon points="328.9,246.7 340.9,243.6 341.4,244.0 329.4,247.1" fill="#4fa1e9" stroke="#4fa1e9" stroke-width="0.4"/>
<polygon points="340.9,243.6 372.1,235.6 372.6,235.9 341.4,244.0" fill="#4890e9" stroke="#4890e9" stroke-width="0.4"/>
<polygon points="372.1,235.6 393.7,230.0 394.2,230.4 372.6,235.9" fill="#4b90e7" stroke="#4b90e7" stroke-width="0.4"/>
<polygon points="393.7,230.0 412.9,225.0 413.4,225.4 394.2,230.4" fill="#3d79e7" stroke="#3d79e7" stroke-width="0.4"/>
<polygon points="412.9,225.0 446.5,216.4 447.0,216.8 413.4,225.4" fill="#407ae5" stroke="#407ae5" stroke-width="0.4"/>
<polygon points="446.5,216.4 456.2,213.9 456.6,214.3 447.0,216.8" fill="#3360e5" stroke="#3360e5" stroke-width="0.4"/>
<polygon points="456.2,213.9 497.0,203.4 497.5,203.8 456.6,214.3" fill="#3662e3" stroke="#3662e3" stroke-width="0.4"/>
<polygon points="497.0,203.4 540.2,192.2 540.7,192.6 497.5,203.8" fill="#2d4be1" stroke="#2d4be1" stroke-width="0.4"/>
<polygon points="540.2,192.2 549.8,189.8 550.3,190.2 540.7,192.6" fill="#304edf" stroke="#304edf" stroke-width="0.4"/>
<polygon points="549.8,189.8 581.0,181.7 581.5,182.1 550.3,190.2" fill="#2736df" stroke="#2736df" stroke-width="0.4"/>
<polygon points="581.0,181.7 602.6,176.1 603.1,176.6 581.5,182.1" fill="#2b39dd" stroke="#2b39dd" stroke-width="0.4"/>
<polygon points="266.9,263.1 288.5,257.6 289.0,257.9 267.4,263.5" fill="#2759ed" stroke="#2759ed" stroke-width="0.4"/>
<polygon points="288.5,257.6 329.4,247.1 329.8,247.4 289.0,257.9" fill="#1c3feb" stroke="#1c3feb" stroke-width="0.4"/>
<polygon points="329.4,247.1 372.6,235.9 373.0,236.3 329.8,247.4" fill="#1f41e9" stroke="#1f41e9" stroke-width="0.4"/>
<polygon points="372.6,235.9 413.4,225.4 413.9,225.8 373.0,236.3" fill="#2344e7" stroke="#2344e7" stroke-width="0.4"/>
<polygon points="413.4,225.4 447.0,216.8 447.5,217.2 413.9,225.8" fill="#2646e5" stroke="#2646e5" stroke-width="0.4"/>
<polygon points="447.0,216.8 456.6,214.3 457.1,214.7 447.5,217.2" fill="#1c2ce5" stroke="#1c2ce5" stroke-width="0.4"/>
<polygon points="456.6,214.3 497.5,203.8 498.0,204.2 457.1,214.7" fill="#2030e3" stroke="#2030e3" stroke-width="0.4"/>
<polygon points="497.5,203.8 540.7,192.6 541.2,193.1 498.0,204.2" fill="#2433e1" stroke="#2433e1" stroke-width="0.4"/>
<polygon points="540.7,192.6 581.5,182.1 582.0,182.6 541.2,193.1" fill="#2736df" stroke="#2736df" stroke-width="0.4"/>
<polygon points="581.5,182.1 603.1,176.6 603.6,177.0 582.0,182.6" fill="#2b39dd" stroke="#2b39dd" stroke-width="0.4"/>
<polygon points="267.4,263.5 289.0,257.9 289.4,258.3 267.8,263.9" fill="#2759ed" stroke="#2759ed" stroke-width="0.4"/>
<polygon points="289.0,257.9 329.8,247.4 330.3,247.8 289.4,258.3" fill="#1c3feb" stroke="#1c3feb" stroke-width="0.4"/>
<polygon points="329.8,247.4 373.0,236.3 373.5,236.7 330.3,247.8" fill="#1f41e9" stroke="#1f41e9" stroke-width="0.4"/>
<polygon points="373.0,236.3 413.9,225.8 414.4,226.2 373.5,236.7" fill="#2344e7" stroke="#2344e7" stroke-width="0.4"/>
<polygon points="413.9,225.8 447.5,217.2 448.0,217.6 414.4,226.2" fill="#2646e5" stroke="#2646e5" stroke-width="0.4"/>
<polygon points="447.5,217.2 457.1,214.7 457.6,215.1 448.0,217.6" fill="#1c2ce5" stroke="#1c2ce5" stroke-width="0.4"/>
<polygon points="457.1,214.7 498.0,204.2 498.5,204.6 457.6,215.1" fill="#2030e3" stroke="#2030e3" stroke-width="0.4"/>
<polygon points="498.0,204.2 541.2,193.1 541.7,193.5 498.5,204.6" fill="#2433e1" stroke="#2433e1" stroke-width="0.4"/>
<polygon points="541.2,193.1 582.0,182.6 582.5,183.0 541.7,193.5" fill="#2736df" stroke="#2736df" stroke-width="0.4"/>
<polygon points="582.0,182.6 603.6,177.0 604.2,177.4 582.5,183.0" fill="#2b39dd" stroke="#2b39dd" stroke-width="0.4"/>
<polygon points="267.8,263.9 289.4,258.3 289.9,258.7 268.2,264.2" fill="#52b3ed" stroke="#52b3ed" stroke-width="0.4"/>
<polygon points="289.4,258.3 330.3,247.8 330.7,248.2 289.9,258.7" fill="#4da1eb" stroke="#4da1eb" stroke-width="0.4"/>
<polygon points="330.3,247.8 342.3,244.7 342.7,245.1 330.7,248.2" fill="#4fa1e9" stroke="#4fa1e9" stroke-width="0.4"/>
<polygon points="342.3,244.7 373.5,236.7 374.0,237.1 342.7,245.1" fill="#4890e9" stroke="#4890e9" stroke-width="0.4"/>
<polygon points="373.5,236.7 395.1,231.1 395.6,231.5 374.0,237.1" fill="#4b90e7" stroke="#4b90e7" stroke-width="0.4"/>
<polygon points="395.1,231.1 414.4,226.2 414.8,226.6 395.6,231.5" fill="#3d79e7" stroke="#3d79e7" stroke-width="0.4"/>
<polygon points="414.4,226.2 448.0,217.6 448.5,218.0 414.8,226.6" fill="#407ae5" stroke="#407ae5" stroke-width="0.4"/>
<polygon points="448.0,217.6 457.6,215.1 458.1,215.5 448.5,218.0" fill="#3360e5" stroke="#3360e5" stroke-width="0.4"/>
<polygon points="457.6,215.1 498.5,204.6 498.9,205.0 458.1,215.5" fill="#3662e3" stroke="#3662e3" stroke-width="0.4"/>
<polygon points="498.5,204.6 541.7,193.5 542.2,193.9 498.9,205.0" fill="#2d4be1" stroke="#2d4be1" stroke-width="0.4"/>
<polygon points="541.7,193.5 551.3,191.0 551.8,191.4 542.2,193.9" fill="#304edf" stroke="#304edf" stroke-width="0.4"/>
<polygon points="551.3,191.0 582.5,183.0 583.1,183.4 551.8,191.4" fill="#2736df" stroke="#2736df" stroke-width="0.4"/>
<polygon points="582.5,183.0 604.2,177.4 604.7,177.9 583.1,183.4" fill="#2b39dd" stroke="#2b39dd" stroke-width="0.4"/>
<polygon points="268.2,264.2 289.9,258.7 290.3,259.0 268.7,264.6" fill="#60e2ed" stroke="#60e2ed" stroke-width="0.4"/>
<polygon points="289.9,258.7 321.1,250.6 321.5,251.0 290.3,259.0" fill="#5ed9eb" stroke="#5ed9eb" stroke-width="0.4"/>
<polygon points="321.1,250.6 330.7,248.2 331.2,248.5 321.5,251.0" fill="#5bcfeb" stroke="#5bcfeb" stroke-width="0.4"/>
<polygon points="330.7,248.2 352.3,242.6 352.8,243.0 331.2,248.5" fill="#5dcee9" stroke="#5dcee9" stroke-width="0.4"/>
<polygon points="352.3,242.6 374.0,237.1 374.4,237.5 352.8,243.0" fill="#59c0e9" stroke="#59c0e9" stroke-width="0.4"/>
<polygon points="374.0,237.1 386.0,234.0 386.5,234.4 374.4,237.5" fill="#5bbfe7" stroke="#5bbfe7" stroke-width="0.4"/>
<polygon points="386.0,234.0 414.8,226.6 415.3,227.0 386.5,234.4" fill="#58b2e7" stroke="#58b2e7" stroke-width="0.4"/>
<polygon points="414.8,226.6 417.2,226.0 417.7,226.4 415.3,227.0" fill="#5ab1e5" stroke="#5ab1e5" stroke-width="0.4"/>
<polygon points="417.2,226.0 448.5,218.0 449.0,218.3 417.7,226.4" fill="#53a1e5" stroke="#53a1e5" stroke-width="0.4"/>
<polygon points="448.5,218.0 458.1,215.5 458.6,215.9 449.0,218.3" fill="#4d91e5" stroke="#4d91e5" stroke-width="0.4"/>
<polygon points="458.1,215.5 479.7,209.9 480.2,210.3 458.6,215.9" fill="#4f91e3" stroke="#4f91e3" stroke-width="0.4"/>
<polygon points="479.7,209.9 498.9,205.0 499.4,205.4 480.2,210.3" fill="#437be3" stroke="#437be3" stroke-width="0.4"/>
<polygon points="498.9,205.0 511.0,201.9 511.5,202.3 499.4,205.4" fill="#457ce1" stroke="#457ce1" stroke-width="0.4"/>
<polygon points="511.0,201.9 542.2,193.9 542.7,194.3 511.5,202.3" fill="#3964e1" stroke="#3964e1" stroke-width="0.4"/>
<polygon points="542.2,193.9 573.4,185.9 574.0,186.3 542.7,194.3" fill="#304edf" stroke="#304edf" stroke-width="0.4"/>
<polygon points="573.4,185.9 583.1,183.4 583.6,183.8 574.0,186.3" fill="#2736df" stroke="#2736df" stroke-width="0.4"/>
<polygon points="583.1,183.4 604.7,177.9 605.2,178.3 583.6,183.8" fill="#2b39dd" stroke="#2b39dd" stroke-width="0.4"/>
<polygon points="268.7,264.6 290.3,259.0 290.7,259.4 269.1,264.9" fill="#59e25d" stroke="#59e25d" stroke-width="0.4"/>
<polygon points="290.3,259.0 314.3,252.9 314.8,253.2 290.7,259.4" fill="#5be06d" stroke="#5be06d" stroke-width="0.4"/>
<polygon points="314.3,252.9 331.2,248.5 331.6,248.9 314.8,253.2" fill="#5ee0a1" stroke="#5ee0a1" stroke-width="0.4"/>
<polygon points="331.2,248.5 336.0,247.3 336.4,247.7 331.6,248.9" fill="#60dfa1" stroke="#60dfa1" stroke-width="0.4"/>
<polygon points="336.0,247.3 357.6,241.8 358.1,242.1 336.4,247.7" fill="#64dfce" stroke="#64dfce" stroke-width="0.4"/>
<polygon points="357.6,241.8 374.4,237.5 374.9,237.8 358.1,242.1" fill="#64dfe9" stroke="#64dfe9" stroke-width="0.4"/>
<polygon points="374.4,237.5 381.6,235.6 382.1,236.0 374.9,237.8" fill="#65dde7" stroke="#65dde7" stroke-width="0.4"/>
<polygon points="381.6,235.6 403.3,230.1 403.8,230.4 382.1,236.0" fill="#62d6e7" stroke="#62d6e7" stroke-width="0.4"/>
<polygon points="403.3,230.1 415.3,227.0 415.8,227.4 403.8,230.4" fill="#5fcce7" stroke="#5fcce7" stroke-width="0.4"/>
<polygon points="415.3,227.0 424.9,224.5 425.4,224.9 415.8,227.4" fill="#60cbe5" stroke="#60cbe5" stroke-width="0.4"/>
<polygon points="424.9,224.5 449.0,218.3 449.4,218.7 425.4,224.9" fill="#5dbee5" stroke="#5dbee5" stroke-width="0.4"/>
<polygon points="449.0,218.3 458.6,215.9 459.1,216.3 449.4,218.7" fill="#5ab1e5" stroke="#5ab1e5" stroke-width="0.4"/>
<polygon points="458.6,215.9 470.6,212.8 471.1,213.2 459.1,216.3" fill="#5cb1e3" stroke="#5cb1e3" stroke-width="0.4"/>
<polygon points="470.6,212.8 492.2,207.3 492.7,207.7 471.1,213.2" fill="#55a1e3" stroke="#55a1e3" stroke-width="0.4"/>
<polygon points="492.2,207.3 499.4,205.4 499.9,205.8 492.7,207.7" fill="#4f91e3" stroke="#4f91e3" stroke-width="0.4"/>
<polygon points="499.4,205.4 516.3,201.1 516.8,201.5 499.9,205.8" fill="#5192e1" stroke="#5192e1" stroke-width="0.4"/>
<polygon points="516.3,201.1 537.9,195.5 538.4,196.0 516.8,201.5" fill="#457ce1" stroke="#457ce1" stroke-width="0.4"/>
<polygon points="537.9,195.5 542.7,194.3 543.2,194.7 538.4,196.0" fill="#3964e1" stroke="#3964e1" stroke-width="0.4"/>
<polygon points="542.7,194.3 559.5,190.0 560.0,190.4 543.2,194.7" fill="#3c66df" stroke="#3c66df" stroke-width="0.4"/>
<polygon points="559.5,190.0 583.6,183.8 584.1,184.3 560.0,190.4" fill="#304edf" stroke="#304edf" stroke-width="0.4"/>
<polygon points="583.6,183.8 605.2,178.3 605.7,178.7 584.1,184.3" fill="#2b39dd" stroke="#2b39dd" stroke-width="0.4"/>
<polygon points="269.1,264.9 273.9,263.7 274.3,264.1 269.5,265.3" fill="#ece74e" stroke="#ece74e" stroke-width="0.4"/>
<polygon points="273.9,263.7 290.7,259.4 291.2,259.7 274.3,264.1" fill="#d0e64e" stroke="#d0e64e" stroke-width="0.4"/>
<polygon points="290.7,259.4 310.0,254.5 310.4,254.8 291.2,259.7" fill="#a1e050" stroke="#a1e050" stroke-width="0.4"/>
<polygon points="310.0,254.5 326.8,250.1 327.3,250.5 310.4,254.8" fill="#74e054" stroke="#74e054" stroke-width="0.4"/>
<polygon points="326.8,250.1 331.6,248.9 332.1,249.3 327.3,250.5" fill="#5ee057" stroke="#5ee057" stroke-width="0.4"/>
<polygon points="331.6,248.9 343.6,245.8 344.1,246.2 332.1,249.3" fill="#60df59" stroke="#60df59" stroke-width="0.4"/>
<polygon points="343.6,245.8 360.5,241.5 360.9,241.9 344.1,246.2" fill="#5ddf60" stroke="#5ddf60" stroke-width="0.4"/>
<polygon points="360.5,241.5 374.9,237.8 375.4,238.2 360.9,241.9" fill="#5ddf6e" stroke="#5ddf6e" stroke-width="0.4"/>
<polygon points="374.9,237.8 379.7,236.6 380.2,237.0 375.4,238.2" fill="#5fdd6f" stroke="#5fdd6f" stroke-width="0.4"/>
<polygon points="379.7,236.6 396.5,232.3 397.0,232.7 380.2,237.0" fill="#62dda1" stroke="#62dda1" stroke-width="0.4"/>
<polygon points="396.5,232.3 413.4,228.0 413.8,228.4 397.0,232.7" fill="#65ddcc" stroke="#65ddcc" stroke-width="0.4"/>
<polygon points="413.4,228.0 415.8,227.4 416.2,227.8 413.8,228.4" fill="#65dde7" stroke="#65dde7" stroke-width="0.4"/>
<polygon points="415.8,227.4 430.2,223.7 430.7,224.1 416.2,227.8" fill="#67dbe5" stroke="#67dbe5" stroke-width="0.4"/>
<polygon points="430.2,223.7 449.4,218.7 449.9,219.1 430.7,224.1" fill="#64d5e5" stroke="#64d5e5" stroke-width="0.4"/>
<polygon points="449.4,218.7 459.1,216.3 459.5,216.7 449.9,219.1" fill="#60cbe5" stroke="#60cbe5" stroke-width="0.4"/>
<polygon points="459.1,216.3 466.3,214.4 466.8,214.8 459.5,216.7" fill="#62cae3" stroke="#62cae3" stroke-width="0.4"/>
<polygon points="466.3,214.4 483.1,210.1 483.6,210.5 466.8,214.8" fill="#5fbde3" stroke="#5fbde3" stroke-width="0.4"/>
<polygon points="483.1,210.1 499.9,205.8 500.4,206.2 483.6,210.5" fill="#5cb1e3" stroke="#5cb1e3" stroke-width="0.4"/>
<polygon points="499.9,205.8 519.2,200.9 519.7,201.3 500.4,206.2" fill="#58a1e1" stroke="#58a1e1" stroke-width="0.4"/>
<polygon points="519.2,200.9 536.0,196.6 536.5,197.0 519.7,201.3" fill="#5192e1" stroke="#5192e1" stroke-width="0.4"/>
<polygon points="536.0,196.6 543.2,194.7 543.7,195.1 536.5,197.0" fill="#457ce1" stroke="#457ce1" stroke-width="0.4"/>
<polygon points="543.2,194.7 552.8,192.3 553.3,192.7 543.7,195.1" fill="#487ddf" stroke="#487ddf" stroke-width="0.4"/>
<polygon points="552.8,192.3 569.7,188.0 570.2,188.4 553.3,192.7" fill="#3c66df" stroke="#3c66df" stroke-width="0.4"/>
<polygon points="569.7,188.0 584.1,184.3 584.6,184.7 570.2,188.4" fill="#304edf" stroke="#304edf" stroke-width="0.4"/>
<polygon points="584.1,184.3 588.9,183.0 589.4,183.4 584.6,184.7" fill="#3450dd" stroke="#3450dd" stroke-width="0.4"/>
<polygon points="588.9,183.0 605.7,178.7 606.3,179.1 589.4,183.4" fill="#2b39dd" stroke="#2b39dd" stroke-width="0.4"/>
<polygon points="269.5,265.3 276.7,263.4 277.2,263.8 270.0,265.6" fill="#edcc4b" stroke="#edcc4b" stroke-width="0.4"/>
<polygon points="276.7,263.4 291.2,259.7 291.6,260.1 277.2,263.8" fill="#f0de4e" stroke="#f0de4e" stroke-width="0.4"/>
<polygon points="291.2,259.7 305.6,256.1 306.1,256.4 291.6,260.1" fill="#eee454" stroke="#eee454" stroke-width="0.4"/>
<polygon points="305.6,256.1 320.0,252.4 320.5,252.7 306.1,256.4" fill="#eee954" stroke="#eee954" stroke-width="0.4"/>
<polygon points="320.0,252.4 332.1,249.3 332.5,249.7 320.5,252.7" fill="#eae650" stroke="#eae650" stroke-width="0.4"/>
<polygon points="332.1,249.3 334.5,248.7 334.9,249.0 332.5,249.7" fill="#e8e452" stroke="#e8e452" stroke-width="0.4"/>
<polygon points="334.5,248.7 348.9,245.0 349.4,245.4 334.9,249.0" fill="#cee252" stroke="#cee252" stroke-width="0.4"/>
<polygon points="348.9,245.0 363.3,241.3 363.8,241.7 349.4,245.4" fill="#a1df52" stroke="#a1df52" stroke-width="0.4"/>
<polygon points="363.3,241.3 375.4,238.2 375.8,238.6 363.8,241.7" fill="#75df56" stroke="#75df56" stroke-width="0.4"/>
<polygon points="375.4,238.2 377.8,237.6 378.2,238.0 375.8,238.6" fill="#76dd58" stroke="#76dd58" stroke-width="0.4"/>
<polygon points="377.8,237.6 392.2,233.9 392.7,234.3 378.2,238.0" fill="#62dd5b" stroke="#62dd5b" stroke-width="0.4"/>
<polygon points="392.2,233.9 406.6,230.2 407.1,230.6 392.7,234.3" fill="#5fdd62" stroke="#5fdd62" stroke-width="0.4"/>
<polygon points="406.6,230.2 416.2,227.8 416.7,228.1 407.1,230.6" fill="#5fdd6f" stroke="#5fdd6f" stroke-width="0.4"/>
<polygon points="416.2,227.8 421.1,226.5 421.5,226.9 416.7,228.1" fill="#60db70" stroke="#60db70" stroke-width="0.4"/>
<polygon points="421.1,226.5 435.5,222.8 436.0,223.2 421.5,226.9" fill="#64dba1" stroke="#64dba1" stroke-width="0.4"/>
<polygon points="435.5,222.8 449.9,219.1 450.4,219.5 436.0,223.2" fill="#67dbcb" stroke="#67dbcb" stroke-width="0.4"/>
<polygon points="449.9,219.1 459.5,216.7 460.0,217.1 450.4,219.5" fill="#67dbe5" stroke="#67dbe5" stroke-width="0.4"/>
<polygon points="459.5,216.7 464.4,215.4 464.8,215.8 460.0,217.1" fill="#68dae3" stroke="#68dae3" stroke-width="0.4"/>
<polygon points="464.4,215.4 478.8,211.8 479.3,212.2 464.8,215.8" fill="#65d3e3" stroke="#65d3e3" stroke-width="0.4"/>
<polygon points="478.8,211.8 490.8,208.7 491.3,209.1 479.3,212.2" fill="#62cae3" stroke="#62cae3" stroke-width="0.4"/>
<polygon points="490.8,208.7 500.4,206.2 500.9,206.6 491.3,209.1" fill="#5fbde3" stroke="#5fbde3" stroke-width="0.4"/>
<polygon points="500.4,206.2 505.2,205.0 505.7,205.4 500.9,206.6" fill="#61bde1" stroke="#61bde1" stroke-width="0.4"/>
<polygon points="505.2,205.0 519.7,201.3 520.2,201.7 505.7,205.4" fill="#5eb0e1" stroke="#5eb0e1" stroke-width="0.4"/>
<polygon points="519.7,201.3 534.1,197.6 534.6,198.0 520.2,201.7" fill="#58a1e1" stroke="#58a1e1" stroke-width="0.4"/>
<polygon points="534.1,197.6 543.7,195.1 544.2,195.6 534.6,198.0" fill="#5192e1" stroke="#5192e1" stroke-width="0.4"/>
<polygon points="543.7,195.1 548.5,193.9 549.0,194.3 544.2,195.6" fill="#5492df" stroke="#5492df" stroke-width="0.4"/>
<polygon points="548.5,193.9 563.0,190.2 563.5,190.6 549.0,194.3" fill="#487ddf" stroke="#487ddf" stroke-width="0.4"/>
<polygon points="563.0,190.2 577.4,186.5 577.9,186.9 563.5,190.6" fill="#3c66df" stroke="#3c66df" stroke-width="0.4"/>
<polygon points="577.4,186.5 584.6,184.7 585.1,185.1 577.9,186.9" fill="#304edf" stroke="#304edf" stroke-width="0.4"/>
<polygon points="584.6,184.7 591.8,182.8 592.3,183.3 585.1,185.1" fill="#3450dd" stroke="#3450dd" stroke-width="0.4"/>
<polygon points="591.8,182.8 606.3,179.1 606.8,179.6 592.3,183.3" fill="#2b39dd" stroke="#2b39dd" stroke-width="0.4"/>
<polygon points="270.0,265.6 279.6,263.2 280.0,263.5 270.4,266.0" fill="#e2682e" stroke="#e2682e" stroke-width="0.4"/>
<polygon points="279.6,263.2 291.6,260.1 292.1,260.5 280.0,263.5" fill="#e68832" stroke="#e68832" stroke-width="0.4"/>
<polygon points="291.6,260.1 303.6,257.0 304.1,257.4 292.1,260.5" fill="#e49e3b" stroke="#e49e3b" stroke-width="0.4"/>
<polygon points="303.6,257.0 315.7,254.0 316.1,254.3 304.1,257.4" fill="#e7b346" stroke="#e7b346" stroke-width="0.4"/>
<polygon points="315.7,254.0 327.7,250.9 328.2,251.3 316.1,254.3" fill="#ebcb4d" stroke="#ebcb4d" stroke-width="0.4"/>
<polygon points="327.7,250.9 332.5,249.7 333.0,250.0 328.2,251.3" fill="#eedd50" stroke="#eedd50" stroke-width="0.4"/>
<polygon points="332.5,249.7 339.7,247.8 340.2,248.2 333.0,250.0" fill="#ecdb52" stroke="#ecdb52" stroke-width="0.4"/>
<polygon points="339.7,247.8 351.8,244.7 352.2,245.1 340.2,248.2" fill="#ece256" stroke="#ece256" stroke-width="0.4"/>
<polygon points="351.8,244.7 363.8,241.7 364.3,242.0 352.2,245.1" fill="#ece756" stroke="#ece756" stroke-width="0.4"/>
<polygon points="363.8,241.7 375.8,238.6 376.3,239.0 364.3,242.0" fill="#e8e452" stroke="#e8e452" stroke-width="0.4"/>
<polygon points="375.8,238.6 378.2,238.0 378.7,238.4 376.3,239.0" fill="#e6e255" stroke="#e6e255" stroke-width="0.4"/>
<polygon points="378.2,238.0 390.3,234.9 390.7,235.3 378.7,238.4" fill="#cce055" stroke="#cce055" stroke-width="0.4"/>
<polygon points="390.3,234.9 402.3,231.8 402.8,232.2 390.7,235.3" fill="#a1dd55" stroke="#a1dd55" stroke-width="0.4"/>
<polygon points="402.3,231.8 414.3,228.8 414.8,229.1 402.8,232.2" fill="#76dd58" stroke="#76dd58" stroke-width="0.4"/>
<polygon points="414.3,228.8 416.7,228.1 417.2,228.5 414.8,229.1" fill="#62dd5b" stroke="#62dd5b" stroke-width="0.4"/>
<polygon points="416.7,228.1 426.3,225.7 426.8,226.1 417.2,228.5" fill="#64db5d" stroke="#64db5d" stroke-width="0.4"/>
<polygon points="426.3,225.7 438.4,222.6 438.8,223.0 426.8,226.1" fill="#60db64" stroke="#60db64" stroke-width="0.4"/>
<polygon points="438.4,222.6 450.4,219.5 450.9,219.9 438.8,223.0" fill="#60db70" stroke="#60db70" stroke-width="0.4"/>
<polygon points="450.4,219.5 460.0,217.1 460.5,217.5 450.9,219.9" fill="#64dba1" stroke="#64dba1" stroke-width="0.4"/>
<polygon points="460.0,217.1 462.4,216.5 462.9,216.9 460.5,217.5" fill="#65daa1" stroke="#65daa1" stroke-width="0.4"/>
<polygon points="462.4,216.5 474.5,213.4 474.9,213.8 462.9,216.9" fill="#68daca" stroke="#68daca" stroke-width="0.4"/>
<polygon points="474.5,213.4 486.5,210.3 487.0,210.7 474.9,213.8" fill="#68dae3" stroke="#68dae3" stroke-width="0.4"/>
<polygon points="486.5,210.3 498.5,207.2 499.0,207.6 487.0,210.7" fill="#65d3e3" stroke="#65d3e3" stroke-width="0.4"/>
<polygon points="498.5,207.2 500.9,206.6 501.4,207.0 499.0,207.6" fill="#62cae3" stroke="#62cae3" stroke-width="0.4"/>
<polygon points="500.9,206.6 510.5,204.2 511.0,204.6 501.4,207.0" fill="#64c9e1" stroke="#64c9e1" stroke-width="0.4"/>
<polygon points="510.5,204.2 522.6,201.1 523.1,201.5 511.0,204.6" fill="#61bde1" stroke="#61bde1" stroke-width="0.4"/>
<polygon points="522.6,201.1 534.6,198.0 535.1,198.4 523.1,201.5" fill="#5eb0e1" stroke="#5eb0e1" stroke-width="0.4"/>
<polygon points="534.6,198.0 544.2,195.6 544.7,196.0 535.1,198.4" fill="#58a1e1" stroke="#58a1e1" stroke-width="0.4"/>
<polygon points="544.2,195.6 546.6,194.9 547.1,195.4 544.7,196.0" fill="#5aa1df" stroke="#5aa1df" stroke-width="0.4"/>
<polygon points="546.6,194.9 558.7,191.9 559.2,192.3 547.1,195.4" fill="#5492df" stroke="#5492df" stroke-width="0.4"/>
<polygon points="558.7,191.9 570.7,188.8 571.2,189.2 559.2,192.3" fill="#487ddf" stroke="#487ddf" stroke-width="0.4"/>
<polygon points="570.7,188.8 582.7,185.7 583.2,186.1 571.2,189.2" fill="#3c66df" stroke="#3c66df" stroke-width="0.4"/>
<polygon points="582.7,185.7 585.1,185.1 585.6,185.5 583.2,186.1" fill="#304edf" stroke="#304edf" stroke-width="0.4"/>
<polygon points="585.1,185.1 594.7,182.6 595.3,183.1 585.6,185.5" fill="#3450dd" stroke="#3450dd" stroke-width="0.4"/>
<polygon points="594.7,182.6 606.8,179.6 607.3,180.0 595.3,183.1" fill="#2b39dd" stroke="#2b39dd" stroke-width="0.4"/>
<polygon points="264.3,261 270.4,266 268.4,275.7 262.1,269.7" fill="#458c3c" stroke="#458c3c" stroke-width="0.3"/>
<polygon points="264.5,262.6 269.2,266.5 267.7,274 263.1,269.5" fill="#3584a0"/>
<polygon points="265.2,264.6 267.4,266.5 266.3,272 264.2,270.1" fill="#1e3e98"/>
</g>

<!-- orientation cube -->
<g>
  <polygon points="201.7,388.5 226,386 245.6,399.3 221.9,404" fill="url(#gTop)" stroke="#dcdcdc" stroke-width="0.5"/>
  <polygon points="201.7,388.5 221.9,404 215.9,431.1 198.5,414" fill="url(#gLeft)" stroke="#a0a0a0" stroke-width="0.5"/>
  <polygon points="221.9,404 245.6,399.3 240.8,421.2 215.9,431.1" fill="url(#gRight)" stroke="#a4a4a4" stroke-width="0.5"/>
  <text transform="translate(224.3,393.4) rotate(190) skewX(-32)" font-family="Liberation Sans, sans-serif" font-size="5.9" font-weight="bold" fill="#111" stroke="#111" stroke-width="0.25" text-anchor="middle" dominant-baseline="middle">Pos Y</text>
  <text transform="translate(208.8,410) rotate(80) skewX(18)" font-family="Liberation Sans, sans-serif" font-size="7.2" font-weight="bold" fill="#111" stroke="#111" stroke-width="0.25" text-anchor="middle" dominant-baseline="middle">Neg X</text>
  <text transform="translate(231,415.2) rotate(-15) skewX(-12)" font-family="Liberation Sans, sans-serif" font-size="6.8" font-weight="bold" font-style="italic" fill="#111" stroke="#111" stroke-width="0.3" text-anchor="middle" dominant-baseline="middle">Pos Z</text>
  <line x1="198.5" y1="414" x2="201.4" y2="384" stroke="#33c433" stroke-width="1.3"/>
  <polygon points="201.8,381 199.6,385.2 203.3,385.5" fill="#33c433"/>
  <line x1="198.5" y1="414" x2="216.5" y2="434.7" stroke="#1424e8" stroke-width="1.3"/>
  <polygon points="219,437.5 214.3,436 217.6,432.9" fill="#1424e8"/>
  <!-- home -->
  <path d="M186.9 376.3 L191.6 371.8 L193.2 373.3 V372.2 H194.2 V374.3 L196.3 376.3 H194 V379.9 H189.1 V376.3 Z" fill="#000"/>
</g>

<!-- toolbars -->
<g>
  <!-- playback -->
  <rect x="263.2" y="3.2" width="129.6" height="17.4" fill="#000" opacity="0.26" filter="url(#sh)"/>
  <rect x="262.2" y="2" width="129.6" height="17.3" fill="#e6e6e6"/>
  <rect x="262.2" y="2" width="6.2" height="17.3" fill="#bcbcbc"/>
  <g fill="#8e8e8e">
    <rect x="270" y="5" width="1.3" height="10.7"/>
    <polygon points="278,5 278,15.7 271.3,10.35"/>
    <polygon points="284.7,5 284.7,15.7 278,10.35"/>
    <rect x="290.5" y="5" width="1.3" height="10.7"/>
    <polygon points="299.3,5 299.3,15.7 291.8,10.35"/>
    <polygon points="326.1,5 326.1,15.7 333.5,10.35"/>
    <rect x="333.5" y="5" width="1.3" height="10.7"/>
    <polygon points="341,5 341,15.7 347.5,10.35"/>
    <polygon points="347.3,5 347.3,15.7 353.8,10.35"/>
    <rect x="353.7" y="5" width="1.3" height="10.7"/>
  </g>
  <polygon points="307.8,5 307.8,15.9 318.5,10.4" fill="#000"/>
  <!-- hiker -->
  <g fill="none" stroke="#888" stroke-width="1.1" stroke-linecap="round">
    <circle cx="365.4" cy="4.7" r="1.3" fill="#858585" stroke="none"/>
    <path d="M365.4 6.4 L365.3 11.2" stroke-width="1.7"/><path d="M365.3 11.2 L362.3 16 M365.3 11.2 L365.8 16.3 M365.6 7.8 L368.2 9.4" />
    <path d="M368.6 8.8 V16.8" stroke-width="0.6" stroke="#a0a0a0"/>
    <rect x="362.3" y="7" width="2.2" height="3.1" fill="#909090" stroke="none"/>
  </g>
  <!-- runner -->
  <g fill="none" stroke="#888" stroke-width="1.2" stroke-linecap="round" stroke-linejoin="round">
    <circle cx="387.5" cy="7.4" r="1.1" fill="#888" stroke="none"/>
    <path d="M385.5 7.7 L382.7 11.3" stroke-width="1.6"/>
    <path d="M382.7 11.3 L378.6 14.3"/>
    <path d="M382.9 11.2 L385.6 12.2 L384.5 14.2"/>
    <path d="M385 7.4 L382.3 6.7" stroke-width="0.8"/>
    <path d="M385.7 8.4 L387 10.1 L388.7 10.8" stroke-width="0.9"/>
  </g>

  <!-- view modes -->
  <rect x="429.3" y="3.2" width="165" height="17.3" fill="#000" opacity="0.26" filter="url(#sh)"/>
  <rect x="428.3" y="2" width="165" height="17.2" fill="#e6e6e6"/>
  <rect x="428.3" y="2" width="6.2" height="17.2" fill="#bcbcbc"/>
  <!-- cube1 -->
  <g transform="translate(437.9,4.8)">
    <polygon points="0,2.6 3.2,0 11.4,0 8.2,2.6" fill="#2f72b8"/>
    <polygon points="8.2,2.6 11.4,0 11.4,9.2 8.2,11.7" fill="#1d5a94"/>
    <rect x="0" y="2.6" width="8.2" height="9.1" fill="url(#c1f)"/>
  </g>
  <!-- cube2 -->
  <g transform="translate(455.2,4.8)">
    <polygon points="0,2.6 3.2,0 11.6,0 8.4,2.6" fill="#58b4f4"/>
    <polygon points="8.4,2.6 11.6,0 11.6,9.2 8.4,11.7" fill="#3a92e4"/>
    <rect x="0" y="2.6" width="8.4" height="9.1" fill="url(#c2f)"/>
  </g>
  <!-- cube3 -->
  <g transform="translate(473.2,5.2)" stroke="#111" stroke-width="0.8" stroke-linejoin="round">
    <polygon points="0,2.6 3.2,0 11.4,0 8.2,2.6" fill="#4a9ee4"/>
    <polygon points="8.2,2.6 11.4,0 11.4,8.6 8.2,11" fill="#3486d4"/>
    <rect x="0" y="2.6" width="8.2" height="8.4" fill="url(#c3f)"/>
  </g>
  <!-- cube4 mesh -->
  <g transform="translate(490.6,5.2)" stroke="#10243c" stroke-width="0.7" stroke-linejoin="round">
    <polygon points="0,2.6 3.2,0 11.4,0 8.2,2.6" fill="#2f72b8"/>
    <polygon points="8.2,2.6 11.4,0 11.4,8.6 8.2,11" fill="#1d4f84"/>
    <rect x="0" y="2.6" width="8.2" height="8.4" fill="url(#c4f)"/>
    <path d="M2.7 2.6 V11 M5.5 2.6 V11 M0 6.8 H8.2 M9.8 1.3 V9.8 M8.2 6.8 L11.4 4.3 M1.6 1.3 H9.8 M2.7 2.6 L5.9 0 M5.5 2.6 L8.7 0" fill="none" stroke-width="0.6" stroke="#143050"/>
  </g>
  <!-- cube5 -->
  <g transform="translate(508.3,5.2)" stroke="#1c3a5c" stroke-width="0.6" stroke-linejoin="round">
    <polygon points="0,2.6 3.2,0 11.6,0 8.4,2.6" fill="#2c7ac8"/>
    <polygon points="8.4,2.6 11.6,0 11.6,8.6 8.4,11" fill="#1e5c98"/>
    <rect x="0" y="2.6" width="8.4" height="8.4" fill="url(#c1f)"/>
  </g>
  <!-- cube6 wire mesh -->
  <g transform="translate(526,4.6)" stroke="#111" stroke-width="0.6" fill="none" stroke-linejoin="round">
    <polygon points="0,3 3.6,0 12,0 8.4,3"/>
    <polygon points="8.4,3 12,0 12,8.6 8.4,11.6"/>
    <rect x="0" y="3" width="8.4" height="8.6"/>
    <path d="M2.8 3 V11.6 M5.6 3 V11.6 M0 5.9 H8.4 M0 8.7 H8.4 M9.6 2 V10.6 M10.8 1 V9.6 M8.4 5.9 L12 2.9 M8.4 8.7 L12 5.7 M1.2 2 H9.6 M2.4 1 H10.8 M2.8 3 L6.4 0 M5.6 3 L9.2 0" stroke-width="0.55"/>
    <path d="M3.6 0 V8.6 H12 M0 11.6 L3.6 8.6 M6.4 0 V8.6 M9.2 0 V8.6 M3.6 2.9 H12 M3.6 5.7 H12 M1.2 10.6 H9.6 M2.4 9.6 H10.8 M1.2 2 V10.6 M2.4 1 V9.6" stroke-width="0.35" stroke="#777"/>
  </g>
  <!-- cube7 wireframe -->
  <g transform="translate(543.2,4.6)" stroke="#111" stroke-width="0.75" fill="none" stroke-linejoin="round">
    <rect x="0" y="3" width="8.4" height="8.6"/>
    <rect x="3.6" y="0" width="8.4" height="8.6"/>
    <path d="M0 3 L3.6 0 M8.4 3 L12 0 M8.4 11.6 L12 8.6 M0 11.6 L3.6 8.6"/>
  </g>
  <!-- cube8 red dotted -->
  <g transform="translate(560.7,4.6)" stroke="#e02a2a" stroke-width="0.9" fill="none" stroke-dasharray="0.9 1.5">
    <rect x="0" y="3" width="8.6" height="8.6"/>
    <rect x="3.6" y="0" width="8.6" height="8.6"/>
    <path d="M0 3 L3.6 0 M8.6 3 L12.2 0 M8.6 11.6 L12.2 8.6 M0 11.6 L3.6 8.6"/>
  </g>
  <!-- cube9 hidden line -->
  <g transform="translate(578.4,4.6)" stroke="#111" stroke-width="0.8" stroke-linejoin="round">
    <polygon points="0,3 3.6,0 12,0 8.4,3" fill="#fff"/>
    <polygon points="8.4,3 12,0 12,8.6 8.4,11.6" fill="#fff"/>
    <rect x="0" y="3" width="8.4" height="8.6" fill="#fff"/>
    <path d="M4.2 3 V11.6 M0 7.3 H8.4 M10.2 1.5 V10.1 M8.4 7.3 L12 4.3 M1.8 1.5 H10.2 M4.2 3 L7.8 0" fill="none" stroke-width="0.6"/>
  </g>

  <!-- nav toolbar -->
  <rect x="596.9" y="3.2" width="76.8" height="17.3" fill="#000" opacity="0.26" filter="url(#sh)"/>
  <rect x="595.9" y="2" width="76.8" height="17.2" fill="#e6e6e6"/>
  <rect x="595.9" y="2" width="6.2" height="17.2" fill="#bcbcbc"/>
  <rect x="654.3" y="2" width="18.4" height="17.2" fill="#cecece"/>
  <g stroke="#222" stroke-width="0.9" fill="none">
    <path d="M610.4 4 V16.7 M604.1 10.4 H616.6"/>
    <path d="M628 4 V16.7 M621.5 10.4 H634"/>
  </g>
  <text x="612.9" y="16.7" font-family="Liberation Sans, sans-serif" font-size="6.1" font-weight="bold" fill="#2040c8">P</text>
  <text x="630.7" y="16.7" font-family="Liberation Sans, sans-serif" font-size="6.1" font-weight="bold" fill="#2040c8">E</text>
  <!-- rotate icon -->
  <g fill="none" stroke="#1a1a1a" stroke-width="0.95">
    <path d="M641.2 5 A6.4 6.6 0 0 0 645.6 16.2 A6.5 6.5 0 0 0 650.3 5.2"/>
    <path d="M643 3.4 A7 7 0 0 1 647.6 3.4" stroke-width="0.6" stroke="#666"/>
  </g>
  <polygon points="639.6,4.6 642.6,4.4 641.4,7" fill="#111"/>
  <polygon points="647.8,3.4 650.8,3.6 649.6,6.2" fill="#111"/>
  <path d="M645 4 V11.6 L640.8 14.8 M645 11.2 H650.6" stroke="#e23030" stroke-width="1" fill="none"/>
  <path d="M646.2 14.1 H652.2 M649.3 11.8 V17" stroke="#1c3cd0" stroke-width="1.1" fill="none"/>
  <!-- crosshair -->
  <circle cx="663.1" cy="10.3" r="3.1" fill="#dedede"/>
  <g fill="none" stroke="#1a1a1a" stroke-width="0.85">
    <circle cx="663.1" cy="10.3" r="3.5"/>
    <path d="M663.1 5.7 V14.9 M658 10.3 H668.2" stroke-width="0.75"/>
  </g>
  <path d="M656.2 16.4 L659.2 13.7" stroke="#e03030" stroke-width="0.9" fill="none"/>
  <polygon points="659.9,13.1 657.7,13.6 659.3,15.3" fill="#e03030"/>
</g>
</svg>

<div class="t" style="left:200.8px;top:369px;font-size:7.8px;color:#000;transform:none;-webkit-text-stroke:0.15px #000;">y</div>
<div class="t" style="left:220.4px;top:431.5px;font-size:7.6px;color:#000;transform:none;-webkit-text-stroke:0.15px #000;">z</div>
</div>
</body>
</html>
